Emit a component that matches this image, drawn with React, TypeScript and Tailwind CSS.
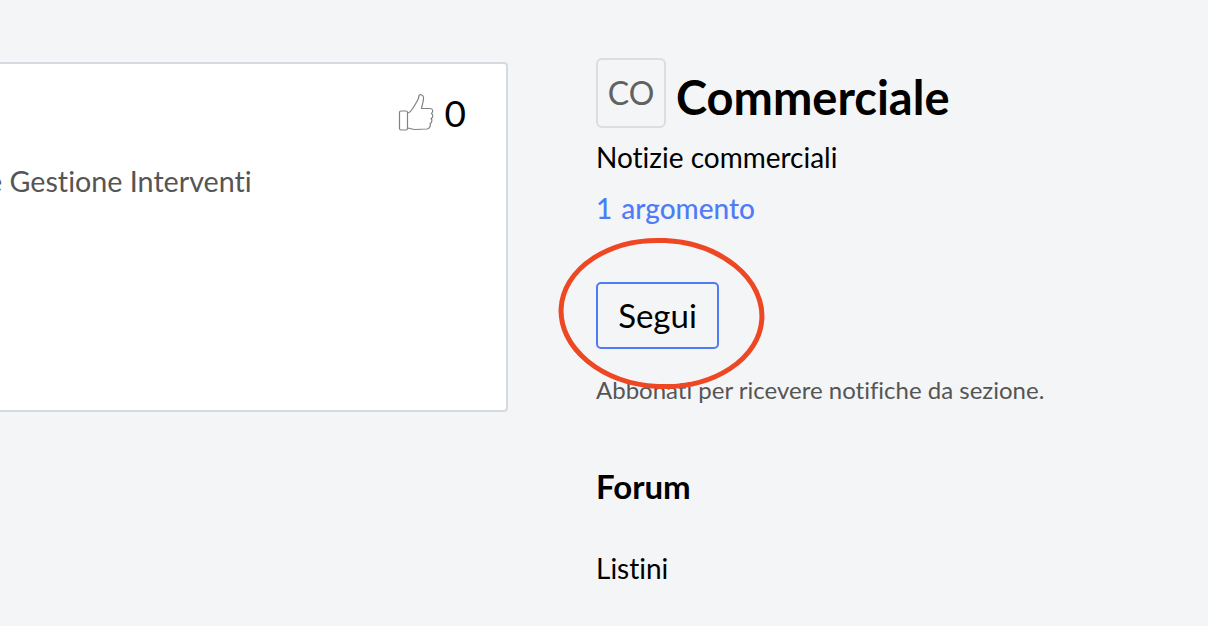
export default function App() {
  return (
    <div className="relative flex h-[626px] w-[1208px] overflow-hidden bg-[#f4f5f7] font-['Lato','Carlito','Open_Sans',sans-serif] [font-variant-ligatures:none]">
      <div className="ml-[-40px] mt-[62px] h-[350px] w-[548px] shrink-0 rounded-[4px] border-2 border-[#d5dae0] bg-white">
        <div className="flex items-center justify-end pr-[40px] pt-[29px]">
          <svg width="36" height="40" viewBox="0 0 36 40" fill="none" stroke="#808285" strokeWidth="1.2" strokeLinejoin="round" strokeLinecap="round" className="mr-[11px] ml-[-2px]">
            <rect x="1.5" y="18" width="8" height="19" rx="1.5" />
            <path d="M9.5 20 C13 20 15 15 18 10 C20 7 21 5 21 2.5 C22 1 25 1.5 25.5 4 C26 8 24 12 23.5 15.5 L32 15.5 C35 15.5 35.5 19 33.5 20.5 C35.5 22 35 25 33 25.5 C34.5 27 34 30 32 30.5 C33 32.5 32 35.5 29 36 L17 36.5 C14 36.5 12 35 9.5 35" />
          </svg>
          <span className="text-[37px] leading-[40px] text-black">0</span>
        </div>
        <div className="mt-[30px] pl-[25px] text-[28.7px] leading-[36px] text-[#555555] whitespace-nowrap">e Gestione Interventi</div>
      </div>
      <div className="ml-[88px] flex flex-col pt-[58px]">
        <div className="flex items-start">
          <div className="flex h-[70px] w-[70px] items-center justify-center rounded-[6px] border-2 border-[#dcdde0] text-[32px] text-[#616161]">CO</div>
          <h1 className="ml-[10px] mt-[8px] text-[47px] font-bold leading-[62px] text-black">Commerciale</h1>
        </div>
        <p className="mt-[11px] text-[28px] leading-[36px] text-black">Notizie commerciali</p>
        <p className="mt-[15px] text-[28px] font-medium leading-[36px] text-[#4f7cf6] [word-spacing:2px]">1 argomento</p>
        <button className="mt-[56px] flex h-[67px] w-[123px] items-center justify-center rounded-[5px] border-2 border-[#4f7cf6] text-[33px] text-black">Segui</button>
        <p className="mt-[25px] text-[24px] leading-[32px] text-[#555555] whitespace-nowrap">Abbonati per ricevere notifiche da sezione.</p>
        <h2 className="mt-[60px] text-[33px] font-bold leading-[40px] text-black">Forum</h2>
        <p className="mt-[44px] text-[28px] leading-[36px] text-black">Listini</p>
      </div>
      <svg className="absolute left-[555px] top-[235px]" width="215" height="158" viewBox="0 0 215 158" fill="none">
        <ellipse cx="106.5" cy="78.5" rx="100.5" ry="73" stroke="#ee4723" strokeWidth="5" transform="rotate(3 106.5 78.5)" />
      </svg>
    </div>
  );
}
